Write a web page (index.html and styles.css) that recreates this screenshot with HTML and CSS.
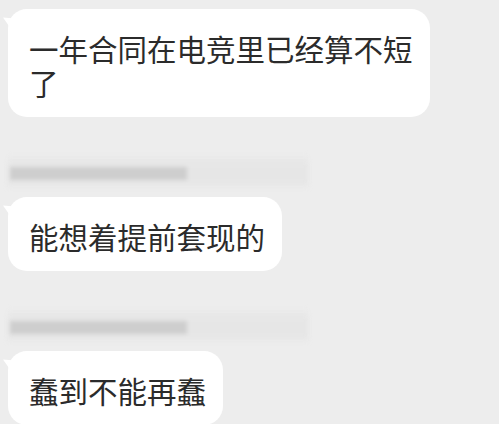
FILE: index.html
```html
<!DOCTYPE html>
<html lang="zh-CN">
<head>
    <meta charset="UTF-8">
    <meta name="viewport" content="width=device-width, initial-scale=1.0">
    <title>聊天记录</title>
    <link rel="stylesheet" href="styles.css">
</head>
<body>
    <div class="chat">
        <div class="msg first">
            <div class="bubble">一年合同在电竞里已经算不短了</div>
        </div>
        <div class="msg">
            <div class="name"><span class="name-bar"></span></div>
            <div class="bubble">能想着提前套现的</div>
        </div>
        <div class="msg">
            <div class="name"><span class="name-bar"></span></div>
            <div class="bubble">蠢到不能再蠢</div>
        </div>
    </div>
</body>
</html>
```

FILE: styles.css
```css
:root {
    --bg-color: #ededed;
    --bubble-color: #fff;
    --text-color: #2b2b2b;
}
body {
    margin: 0;
    padding: 0;
    background-color: var(--bg-color);
    color: var(--text-color);
    font-family: "Noto Sans CJK SC", "Noto Sans", sans-serif;
}
.chat {
    display: flex;
    flex-direction: column;
    padding: 9px 0 0 8px;
    gap: 37px;
}
.msg {
    display: flex;
    flex-direction: column;
    align-items: flex-start;
}
.name {
    position: relative;
    width: 300px;
    height: 35px;
    margin-bottom: 8px;
    background: linear-gradient(to bottom, transparent, #e6e6e6 30%, #e6e6e6 80%, transparent);
    filter: blur(2px);
}
.name-bar {
    position: absolute;
    left: 2px;
    top: 13px;
    width: 177px;
    height: 13px;
    background-color: #cecece;
}
.bubble {
    position: relative;
    max-width: 384px;
    padding: 22px 17px 18px 21px;
    background: var(--bubble-color);
    border-radius: 19px;
    font-size: 29.5px;
    line-height: 34px;
}
.bubble::before {
    content: '';
    position: absolute;
    left: -5px;
    top: 6px;
    border-top: 6px solid transparent;
    border-bottom: 10px solid transparent;
    border-right: 12px solid var(--bubble-color);
    transform: skewY(30deg);
}
```
